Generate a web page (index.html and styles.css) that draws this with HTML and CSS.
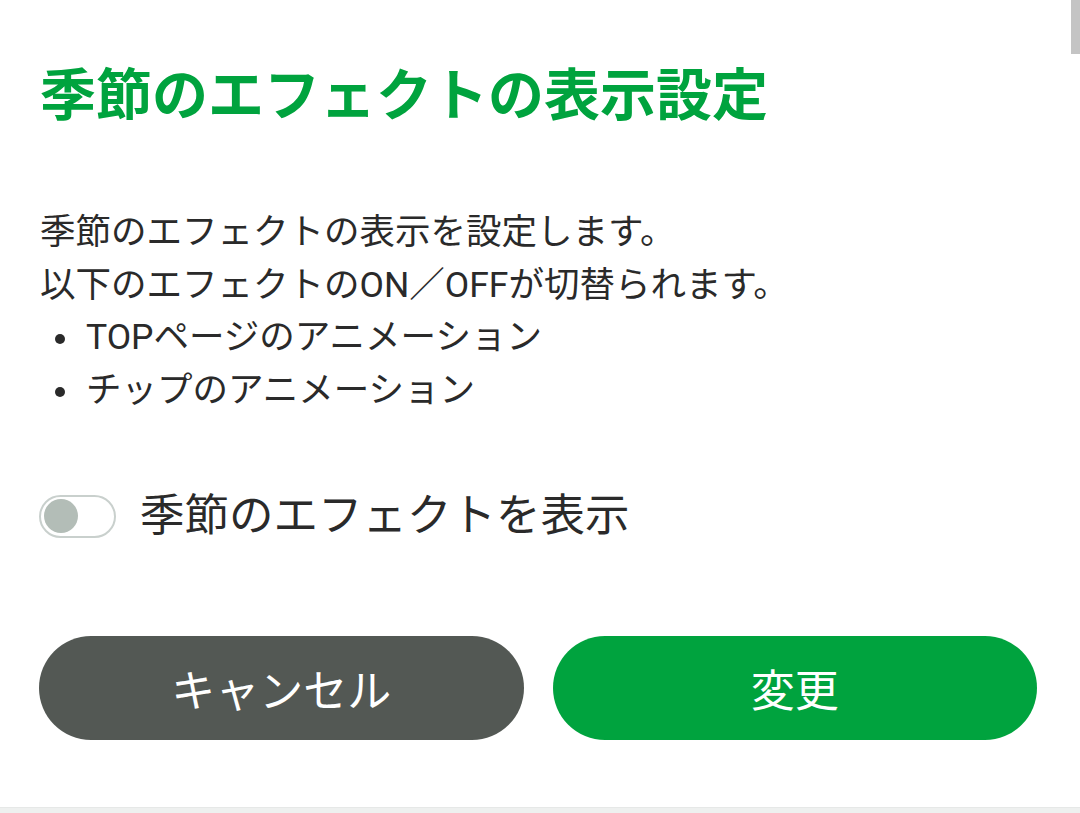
FILE: index.html
```html
<!DOCTYPE html>
<html lang="ja">
<head>
<meta charset="utf-8">
<title>季節のエフェクトの表示設定</title>
<link rel="stylesheet" href="styles.css">
</head>
<body>
<div class="scrollbar"></div>
<main class="dialog">
  <h1 class="title">季節のエフェクトの表示設定</h1>
  <div class="desc">
    <p class="line">季節のエフェクトの表示を設定します。</p>
    <p class="line">以下のエフェクトのON／OFFが切替られます。</p>
    <ul class="list">
      <li class="item">TOPページのアニメーション</li>
      <li class="item">チップのアニメーション</li>
    </ul>
  </div>
  <label class="toggle-row">
    <span class="switch"><span class="knob"></span></span>
    <span class="toggle-label">季節のエフェクトを表示</span>
  </label>
  <div class="actions">
    <button class="btn btn-cancel">キャンセル</button>
    <button class="btn btn-ok">変更</button>
  </div>
</main>
<div class="footer"></div>
</body>
</html>
```

FILE: styles.css
```css
html, body {
  margin: 0;
  padding: 0;
  background: #ffffff;
}
body {
  width: 1080px;
  height: 813px;
  overflow: hidden;
  font-family: Roboto, "Noto Sans CJK JP", sans-serif;
  color: #2a2a2a;
  position: relative;
}
.scrollbar {
  position: absolute;
  top: 0;
  right: 0;
  width: 9px;
  height: 54px;
  background: #c4c4c4;
}
.dialog {
  padding: 60px 43px 0 40px;
  height: 752px;
  box-sizing: border-box;
}
.title {
  margin: 0;
  font-size: 56px;
  line-height: 72px;
  font-weight: 700;
  color: #00a33e;
  letter-spacing: 0;
}
.desc {
  margin-top: 74px;
  font-size: 35.5px;
  line-height: 52.5px;
}
.line {
  margin: 0;
}
.list {
  margin: 0;
  padding: 0;
  list-style: none;
}
.item {
  display: flex;
  align-items: center;
}
.item::before {
  content: "";
  width: 10px;
  height: 10px;
  border-radius: 50%;
  background: #2a2a2a;
  margin: 4px 21px 0 15px;
  flex: none;
}
.toggle-row {
  margin-top: 78px;
  display: flex;
  align-items: center;
  gap: 24px;
  margin-left: -1px;
}
.switch {
  width: 77px;
  height: 43px;
  box-sizing: border-box;
  border: 2px solid #c9d0cd;
  border-radius: 22px;
  display: flex;
  align-items: center;
  padding-left: 3px;
  background: #fff;
}
.knob {
  width: 34px;
  height: 34px;
  border-radius: 50%;
  background: #b3bdb7;
}
.toggle-label {
  font-size: 44.5px;
  line-height: 44px;
  color: #2a2a2a;
}
.actions {
  margin-top: 98px;
  margin-left: -1px;
  display: flex;
  gap: 29px;
}
.btn {
  flex: 1;
  height: 104px;
  border: none;
  border-radius: 52px;
  font-family: Roboto, "Noto Sans CJK JP", sans-serif;
  font-size: 44px;
  color: #ffffff;
  padding: 0;
}
.btn-cancel {
  background: #535854;
}
.btn-ok {
  background: #00a33e;
}
.footer {
  margin-top: 55px;
  height: 6px;
  background: #eef0ef;
  border-top: 1px solid #e6e8e7;
}
```
